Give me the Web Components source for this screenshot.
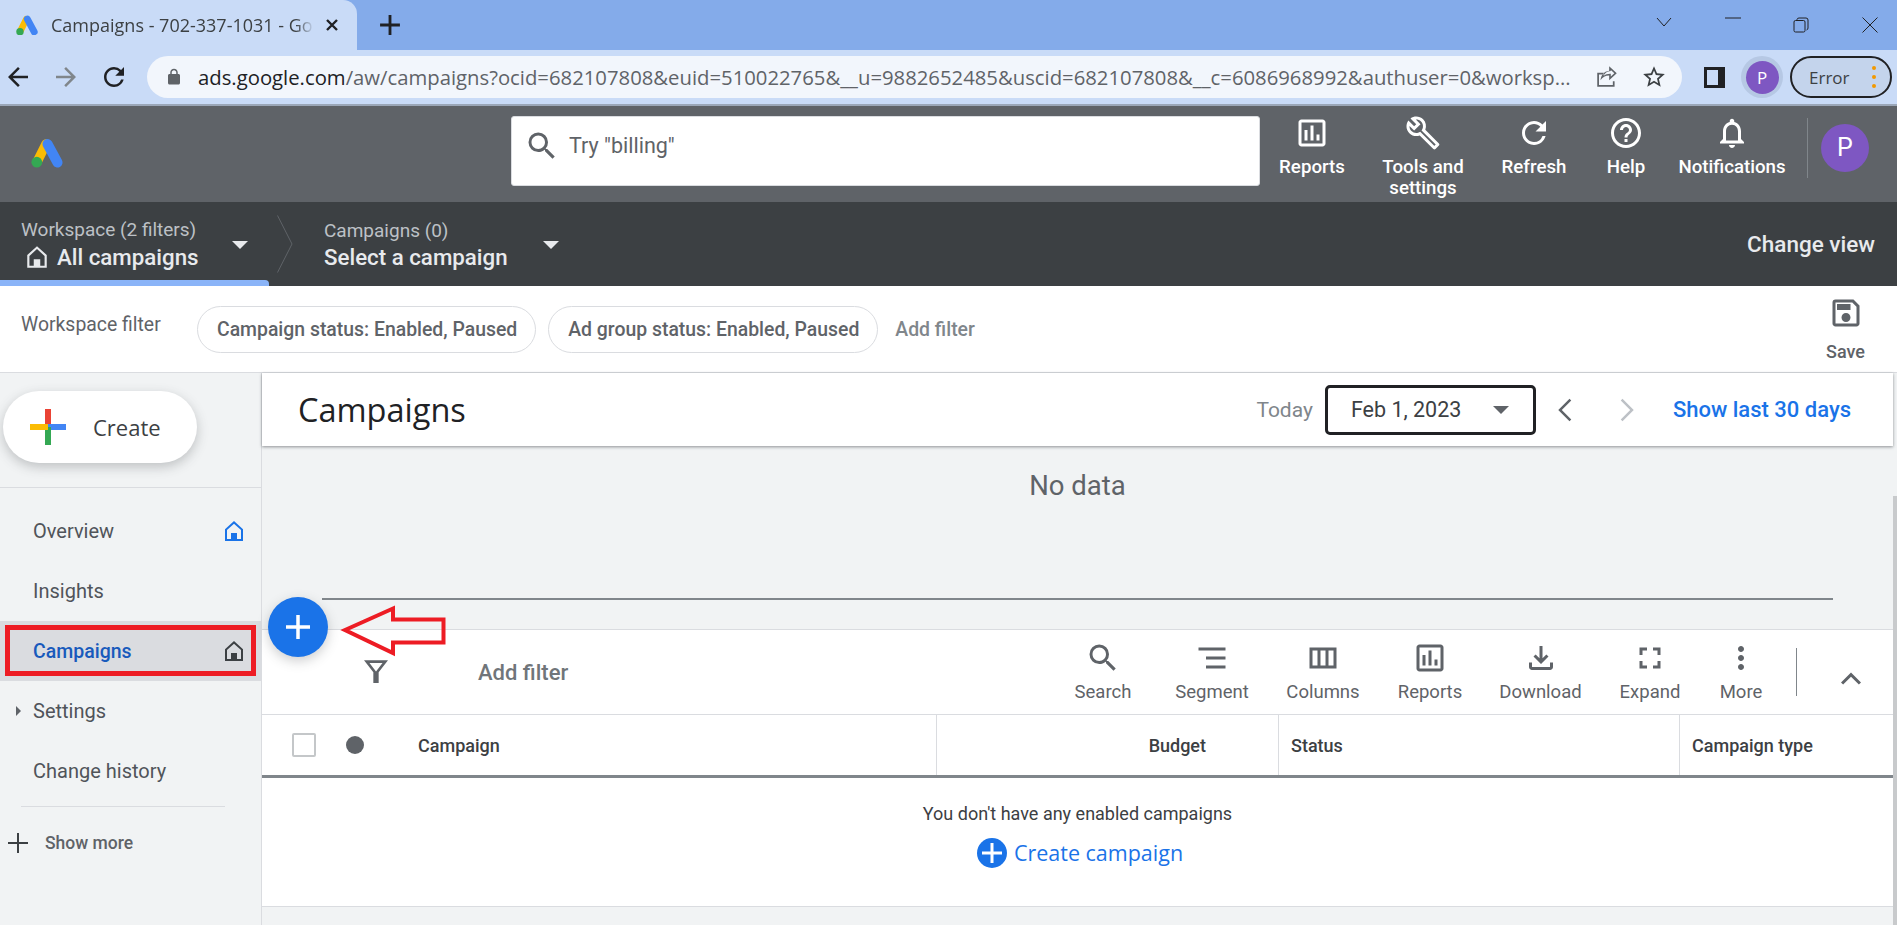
<!DOCTYPE html>
<html lang="en">
<head>
<meta charset="utf-8">
<title>Campaigns</title>
<style>
    html, body { margin: 0; padding: 0; height: 100%; overflow: hidden; background: #f1f3f4; }
    body { font-family: Roboto, "Liberation Sans", sans-serif; }
</style>
</head>
<body>
<ads-app></ads-app>

<script>
const ICONS = {
    search: 'M15.5 14h-.79l-.28-.27A6.471 6.471 0 0 0 16 9.5 6.5 6.5 0 1 0 9.5 16c1.61 0 3.09-.59 4.23-1.57l.27.28v.79l5 4.99L20.49 19l-4.99-5zm-6 0C7.01 14 5 11.99 5 9.5S7.01 5 9.5 5 14 7.01 14 9.5 11.99 14 9.5 14z',
    reports: 'M19 3H5c-1.1 0-2 .9-2 2v14c0 1.1.9 2 2 2h14c1.1 0 2-.9 2-2V5c0-1.1-.9-2-2-2zm0 16H5V5h14v14zM7 10h2v7H7zm4-3h2v10h-2zm4 6h2v4h-2z',
    tools: 'M22.61 18.99l-9.08-9.08c.93-2.34.45-5.1-1.44-7C9.79.61 6.21.4 3.66 2.25L7.5 6.1 6.08 7.51 2.25 3.69C.39 6.23.61 9.82 2.91 12.11c1.86 1.86 4.57 2.35 6.89 1.48l9.11 9.11c.39.39 1.02.39 1.41 0l2.3-2.3c.39-.38.39-1.02-.01-1.41zm-3 1.6l-9.46-9.46c-.61.45-1.29.72-2 .82-1.36.2-2.79-.21-3.83-1.25C3.37 9.76 2.93 8.5 3 7.26l3.09 3.09 4.24-4.24-3.09-3.09c1.24-.07 2.49.37 3.44 1.31 1.08 1.08 1.49 2.57 1.24 3.96-.12.71-.42 1.37-.88 1.96l9.45 9.45-.88.88z',
    refresh: 'M17.65 6.35A7.958 7.958 0 0 0 12 4c-4.42 0-7.99 3.58-7.99 8s3.57 8 7.99 8c3.73 0 6.84-2.55 7.73-6h-2.08A5.99 5.99 0 0 1 12 18c-3.31 0-6-2.69-6-6s2.69-6 6-6c1.66 0 3.14.69 4.22 1.78L13 11h7V4l-2.35 2.35z',
    help: 'M11 18h2v-2h-2v2zm1-16C6.48 2 2 6.48 2 12s4.48 10 10 10 10-4.48 10-10S17.52 2 12 2zm0 18c-4.41 0-8-3.59-8-8s3.59-8 8-8 8 3.59 8 8-3.59 8-8 8zm0-14c-2.21 0-4 1.79-4 4h2c0-1.1.9-2 2-2s2 .9 2 2c0 2-3 1.75-3 5h2c0-2.25 3-2.5 3-5 0-2.21-1.79-4-4-4z',
    bell: 'M12 22c1.1 0 2-.9 2-2h-4c0 1.1.9 2 2 2zm6-6v-5c0-3.07-1.63-5.64-4.5-6.32V4c0-.83-.67-1.5-1.5-1.5s-1.5.67-1.5 1.5v.68C7.64 5.36 6 7.92 6 11v5l-2 2v1h16v-1l-2-2zm-2 1H8v-6c0-2.48 1.51-4.5 4-4.5s4 2.02 4 4.5v6z',
    download: 'M18 15v3H6v-3H4v3c0 1.1.9 2 2 2h12c1.1 0 2-.9 2-2v-3h-2zm-1-4l-1.41-1.41L13 12.17V4h-2v8.17L8.41 9.59 7 11l5 5 5-5z',
    expand: 'M7 14H5v5h5v-2H7v-3zm-2-4h2V7h3V5H5v5zm12 7h-3v2h5v-5h-2v3zM14 5v2h3v3h2V5h-5z',
    more: 'M12 8c1.1 0 2-.9 2-2s-.9-2-2-2-2 .9-2 2 .9 2 2 2zm0 2c-1.1 0-2 .9-2 2s.9 2 2 2 2-.9 2-2-.9-2-2-2zm0 6c-1.1 0-2 .9-2 2s.9 2 2 2 2-.9 2-2-.9-2-2-2z',
    segment: 'M3 5h18v2H3zM8 11h13v2H8zM8 17h13v2H8z',
    columns: 'M3 5v14h18V5H3zm5.33 12H5V7h3.33v10zm5.34 0h-3.34V7h3.34v10zM19 17h-3.33V7H19v10z',
    save: 'M17 3H5a2 2 0 0 0-2 2v14c0 1.1.9 2 2 2h14c1.1 0 2-.9 2-2V7l-4-4zm2 16H5V5h11.17L19 7.83V19zm-7-7c-1.66 0-3 1.34-3 3s1.34 3 3 3 3-1.34 3-3-1.34-3-3-3zM6 6h9v4H6z',
    filter: 'M3 4h18l-7 9v8h-4v-8L3 4zm4.1 2l4.9 6.3L16.9 6H7.1z',
    home: 'M12 2L3 10.2V22h18V10.2L12 2zM19 20H5v-8.9l7-6.4 7 6.4V20zM9 14h6v6H9z',
    back: 'M20 11H7.83l5.59-5.59L12 4l-8 8 8 8 1.41-1.41L7.83 13H20v-2z',
    forward: 'M4 11h12.17l-5.59-5.59L12 4l8 8-8 8-1.41-1.41L16.17 13H4v-2z',
    lock: 'M18 8h-1V6c0-2.76-2.24-5-5-5S7 3.24 7 6v2H6c-1.1 0-2 .9-2 2v10c0 1.1.9 2 2 2h12c1.1 0 2-.9 2-2V10c0-1.1-.9-2-2-2zM9 6c0-1.66 1.34-3 3-3s3 1.34 3 3v2H9V6z',
    star: 'M22 9.24l-7.19-.62L12 2 9.19 8.63 2 9.24l5.46 4.73L5.82 21 12 17.27 18.18 21l-1.63-7.03L22 9.24zM12 15.4l-3.76 2.27 1-4.28-3.32-2.88 4.38-.38L12 6.1l1.71 4.04 4.38.38-3.32 2.88 1 4.28L12 15.4z',
    share: 'M3 10v11h16v-5h-1.6v3.4H4.6v-9.8H9V8H3v2zm11-8v4.2C9 6.9 6.5 10.5 6 15c1.8-2.9 4.4-4.3 8-4.4V15l7-6.5L14 2zm1.5 3.6l3.3 2.9-3.3 3v-2.4c-2.8-.1-5 .6-6.8 2 1-2.6 3.3-4.4 6.8-4.7V5.6z',
    plus: 'M19 13h-6v6h-2v-6H5v-2h6V5h2v6h6v2z',
    left: 'M15.41 4.41L14 3l-9 9 9 9 1.41-1.41L7.83 12z',
    right: 'M8.59 4.41L10 3l9 9-9 9-1.41-1.41L16.17 12z',
    up: 'M12 7.5l-8 8 1.7 1.7L12 10.9l6.3 6.3 1.7-1.7z'
};

class GIcon extends HTMLElement {
    connectedCallback() {
        const size = this.getAttribute('size') || 24;
        const color = this.getAttribute('color') || 'currentColor';
        const d = ICONS[this.getAttribute('name')];
        this.attachShadow({ mode: 'open' });
        this.shadowRoot.innerHTML = `
            <style>
                :host { display: block; flex: none; width: ${size}px; height: ${size}px; }
                svg { display: block; width: 100%; height: 100%; }
            </style>
            <svg viewBox="0 0 24 24"><path fill="${color}" fill-rule="evenodd" d="${d}"/></svg>
        `;
    }
}

class AdsLogo extends HTMLElement {
    connectedCallback() {
        const w = this.getAttribute('width') || 32;
        this.attachShadow({ mode: 'open' });
        this.shadowRoot.innerHTML = `
            <style>
                :host { display: block; flex: none; width: ${w}px; }
                svg { display: block; width: 100%; }
            </style>
            <svg viewBox="0 0 32 30">
                <path d="M15 6 L6 24" stroke="#fbbc04" stroke-width="9.5" stroke-linecap="round"/>
                <path d="M16.5 6 L26.5 24.5" stroke="#4285f4" stroke-width="10" stroke-linecap="round"/>
                <circle cx="5.8" cy="24.2" r="5.4" fill="#34a853"/>
            </svg>
        `;
    }
}

class BrowserChrome extends HTMLElement {
    constructor() {
        super();
        this.attachShadow({ mode: 'open' });
        this.shadowRoot.innerHTML = `
            <style>
                :host {
                    display: block;
                    height: 106px;
                    font-family: "Open Sans", "Noto Sans", sans-serif;
                    color: #202124;
                }
                .strip {
                    height: 50px;
                    background: #84abea;
                    display: flex;
                    align-items: center;
                }
                .tab {
                    width: 357px;
                    height: 50px;
                    box-sizing: border-box;
                    background: #c9dbf7;
                    border-radius: 0 14px 0 0;
                    display: flex;
                    align-items: center;
                    padding-left: 16px;
                }
                .tab-title {
                    width: 263px;
                    flex: none;
                    margin: 0 11px 0 13px;
                    font-size: 18px;
                    white-space: nowrap;
                    -webkit-mask-image: linear-gradient(90deg, #000 93%, transparent 100%);
                    mask-image: linear-gradient(90deg, #000 93%, transparent 100%);
                    color: #3c4043;
                }
                .new-tab { margin-left: 16px; }
                .win {
                    margin-left: auto;
                    display: grid;
                    grid-template-columns: repeat(4, 68.5px);
                    justify-items: center;
                    width: 274px;
                    margin-right: -7px;
                }
                .win svg { display: block; }
                .bar {
                    height: 54px;
                    box-sizing: border-box;
                    background: #c9dbf7;
                    display: flex;
                    align-items: center;
                    padding-left: 3px;
                }
                .nav { display: flex; gap: 18px; }
                .omni {
                    width: 1535px;
                    height: 42px;
                    margin-left: 18px;
                    box-sizing: border-box;
                    background: #f2f6fc;
                    border-radius: 21px;
                    display: flex;
                    align-items: center;
                    padding: 0 15px 0 18px;
                }
                .url {
                    margin-left: 15px;
                    width: 1376px;
                    flex: none;
                    font-size: 20.3px;
                    color: #5f6368;
                    white-space: nowrap;
                }
                .url b { font-weight: 400; color: #202124; }
                .omni-end { display: flex; gap: 21px; margin-left: auto; }
                .panel {
                    width: 21px;
                    height: 21px;
                    margin-left: 22px;
                    box-sizing: border-box;
                    background: #202124;
                    padding: 3px 7px 3px 3px;
                }
                .panel i { display: block; width: 100%; height: 100%; background: #c9dbf7; }
                .face {
                    width: 42px;
                    height: 42px;
                    margin-left: 16px;
                    border-radius: 50%;
                    background: #b6c8e4;
                    display: flex;
                    align-items: center;
                    justify-content: center;
                }
                .face span {
                    width: 33px;
                    height: 33px;
                    border-radius: 50%;
                    background: #7e57c2;
                    color: #fff;
                    font-size: 17px;
                    line-height: 33px;
                    text-align: center;
                }
                .err {
                    width: 102px;
                    height: 42px;
                    margin-left: 7px;
                    box-sizing: border-box;
                    border: 2px solid #202124;
                    border-radius: 21px;
                    background: #c4d4ec;
                    display: flex;
                    align-items: center;
                    padding-left: 17px;
                    font-size: 17px;
                    color: #3c4043;
                }
                .dots { margin-left: 22px; display: grid; gap: 5px; }
                .dots i { width: 4px; height: 4px; border-radius: 50%; background: #f29900; }
                .edge { height: 2px; background: #9ba7b8; }
            </style>
            <div class="strip">
                <div class="tab">
                    <ads-logo width="22"></ads-logo>
                    <div class="tab-title">Campaigns - 702-337-1031 - Go</div>
                    <svg width="14" height="14" viewBox="0 0 14 14"><path d="M2 2l10 10M12 2L2 12" stroke="#202124" stroke-width="2.4"/></svg>
                </div>
                <g-icon class="new-tab" name="plus" size="34" color="#202124"></g-icon>
                <div class="win">
                    <svg width="16" height="10" viewBox="0 0 16 10"><path d="M1 1l7 8 7-8" fill="none" stroke="#202124"/></svg>
                    <svg width="16" height="2" viewBox="0 0 16 2"><path d="M0 1h16" stroke="#202124"/></svg>
                    <svg width="16" height="16" viewBox="0 0 16 16"><path d="M4 3.5V2.5a2 2 0 0 1 2-1.5h7a2 2 0 0 1 2 2v8a2 2 0 0 1-1.5 2M2.5 3.5h8a1.5 1.5 0 0 1 1.5 1.5v8.5a1.5 1.5 0 0 1-1.5 1.5h-8a1.5 1.5 0 0 1-1.5-1.5V5a1.5 1.5 0 0 1 1.5-1.5z" fill="none" stroke="#202124"/></svg>
                    <svg width="16" height="16" viewBox="0 0 16 16"><path d="M.5.5l15 15M15.5.5l-15 15" stroke="#202124"/></svg>
                </div>
            </div>
            <div class="bar">
                <div class="nav">
                    <g-icon name="back" size="30" color="#202124"></g-icon>
                    <g-icon name="forward" size="30" color="#80868b"></g-icon>
                    <g-icon name="refresh" size="30" color="#202124"></g-icon>
                </div>
                <div class="omni">
                    <g-icon name="lock" size="18" color="#5f6368"></g-icon>
                    <div class="url"><b>ads.google.com</b>/aw/campaigns?ocid=682107808&amp;euid=510022765&amp;__u=9882652485&amp;uscid=682107808&amp;__c=6086968992&amp;authuser=0&amp;worksp...</div>
                    <div class="omni-end">
                        <g-icon name="share" size="26" color="#5f6368"></g-icon>
                        <g-icon name="star" size="26" color="#3c4043"></g-icon>
                    </div>
                </div>
                <div class="panel"><i></i></div>
                <div class="face"><span>P</span></div>
                <div class="err">Error<span class="dots"><i></i><i></i><i></i></span></div>
            </div>
            <div class="edge"></div>
        `;
    }
}

class ToolBtn extends HTMLElement {
    constructor() {
        super();
        this.attachShadow({ mode: 'open' });
        this.shadowRoot.innerHTML = `
            <style>
                :host {
                    display: flex;
                    flex-direction: column;
                    align-items: center;
                    flex: none;
                    text-align: center;
                    font-size: var(--tool-size, 18.7px);
                    font-weight: var(--tool-weight, 500);
                    line-height: 21px;
                    color: var(--tool-color, #fff);
                }
                .label { margin-top: var(--tool-gap, 6px); }
            </style>
            <slot name="icon"></slot>
            <div class="label"><slot></slot></div>
        `;
    }
}

class AdsHeader extends HTMLElement {
    constructor() {
        super();
        this.attachShadow({ mode: 'open' });
        this.shadowRoot.innerHTML = `
            <style>
                :host {
                    display: flex;
                    height: 96px;
                    box-sizing: border-box;
                    background: #5f6368;
                    padding: 9px 0 0 31px;
                }
                ads-logo { margin-top: 23px; }
                .search {
                    width: 749px;
                    height: 70px;
                    margin: 1px 0 0 448px;
                    box-sizing: border-box;
                    background: #fff;
                    border: 1px solid #dadce0;
                    border-radius: 3px;
                    display: flex;
                    padding: 11px 0 0 12px;
                    font-size: 21.5px;
                    color: #5f6368;
                }
                .search span { margin: 5px 0 0 9px; }
                .tools { display: flex; margin-left: 2px; }
                .rule { width: 1px; height: 60px; margin: 3px 0 0 11px; background: #80868b; }
                .me {
                    width: 48px;
                    height: 48px;
                    margin: 9px 0 0 13px;
                    border-radius: 50%;
                    background: #7e57c2;
                    color: #fff;
                    font-size: 25px;
                    line-height: 48px;
                    text-align: center;
                }
            </style>
            <ads-logo width="32"></ads-logo>
            <div class="search">
                <g-icon name="search" size="36" color="#5f6368"></g-icon>
                <span>Try "billing"</span>
            </div>
            <div class="tools">
                <tool-btn style="width:100px"><g-icon slot="icon" name="reports" size="36" color="#fff"></g-icon>Reports</tool-btn>
                <tool-btn style="width:122px"><g-icon slot="icon" name="tools" size="36" color="#fff"></g-icon>Tools and settings</tool-btn>
                <tool-btn style="width:100px"><g-icon slot="icon" name="refresh" size="36" color="#fff"></g-icon>Refresh</tool-btn>
                <tool-btn style="width:84px"><g-icon slot="icon" name="help" size="36" color="#fff"></g-icon>Help</tool-btn>
                <tool-btn style="width:128px"><g-icon slot="icon" name="bell" size="36" color="#fff"></g-icon>Notifications</tool-btn>
            </div>
            <div class="rule"></div>
            <div class="me">P</div>
        `;
    }
}

class CrumbItem extends HTMLElement {
    constructor() {
        super();
        this.attachShadow({ mode: 'open' });
        this.shadowRoot.innerHTML = `
            <style>
                :host {
                    display: flex;
                    position: relative;
                    box-sizing: border-box;
                    height: 84px;
                    flex: none;
                }
                :host([active])::after {
                    content: "";
                    position: absolute;
                    left: 0;
                    right: 0;
                    bottom: 0;
                    height: 6px;
                    background: #8ab4f8;
                    border-radius: 0 4px 0 0;
                }
                .text { width: var(--text-w); padding-top: var(--top); box-sizing: border-box; }
                .small { font-size: 19px; line-height: 22px; color: #bdc1c6; }
                .big {
                    display: flex;
                    align-items: center;
                    gap: 7px;
                    margin-top: var(--gap);
                    font-size: 22.3px;
                    font-weight: 500;
                    line-height: 26px;
                    color: #e8eaed;
                    white-space: nowrap;
                }
                .caret {
                    width: 0;
                    height: 0;
                    margin-top: 39px;
                    border: 8px solid transparent;
                    border-top-color: #e8eaed;
                    border-bottom: 0;
                }
            </style>
            <div class="text">
                <div class="small"><slot name="small"></slot></div>
                <div class="big"><slot name="icon"></slot><slot></slot></div>
            </div>
            <div class="caret"></div>
        `;
    }
}

class AdsCrumbs extends HTMLElement {
    constructor() {
        super();
        this.attachShadow({ mode: 'open' });
        this.shadowRoot.innerHTML = `
            <style>
                :host {
                    display: flex;
                    height: 84px;
                    background: #3c4043;
                }
                .first { width: 269px; padding-left: 21px; --text-w: 211px; --top: 17px; --gap: 3px; }
                .second { margin-left: 31px; --text-w: 219px; --top: 18px; --gap: 2px; }
                .sep { display: block; margin: 13px 0 0 8px; flex: none; }
                .view {
                    margin-left: auto;
                    padding: 29px 22px 0 0;
                    font-size: 22.5px;
                    font-weight: 500;
                    line-height: 26px;
                    color: #e8eaed;
                }
                .house { margin-left: 3px; }
            </style>
            <crumb-item class="first" active>
                <span slot="small">Workspace (2 filters)</span>
                <g-icon class="house" slot="icon" name="home" size="26" color="#e8eaed"></g-icon>
                All campaigns
            </crumb-item>
            <svg class="sep" width="16" height="58" viewBox="0 0 16 58"><path d="M.5.5L15 29 .5 57.5" fill="none" stroke="#5f6368"/></svg>
            <crumb-item class="second">
                <span slot="small">Campaigns (0)</span>
                Select a campaign
            </crumb-item>
            <div class="view">Change view</div>
        `;
    }
}

class FilterChip extends HTMLElement {
    constructor() {
        super();
        this.attachShadow({ mode: 'open' });
        this.shadowRoot.innerHTML = `
            <style>
                :host {
                    display: block;
                    flex: none;
                    height: 47px;
                    box-sizing: border-box;
                    padding: 0 18px 0 19px;
                    border: 1px solid #dadce0;
                    border-radius: 24px;
                    font-size: 19.4px;
                    font-weight: 500;
                    line-height: 45px;
                    color: #5f6368;
                }
            </style>
            <slot></slot>
        `;
    }
}

class FilterStrip extends HTMLElement {
    constructor() {
        super();
        this.attachShadow({ mode: 'open' });
        this.shadowRoot.innerHTML = `
            <style>
                :host {
                    display: flex;
                    height: 87px;
                    box-sizing: border-box;
                    background: #fff;
                    border-bottom: 1px solid #dadce0;
                    padding: 20px 0 0 21px;
                    font-size: 19.4px;
                    color: #5f6368;
                }
                .name { width: 176px; line-height: 24px; margin-top: 7px; }
                .add { margin: 12px 0 0 17px; line-height: 24px; font-weight: 500; color: #80868b; }
                tool-btn {
                    margin: -11px 32px 0 auto;
                    --tool-color: #5f6368;
                    --tool-size: 18px;
                    --tool-gap: 10px;
                }
                filter-chip + filter-chip { margin-left: 12px; }
            </style>
            <div class="name">Workspace filter</div>
            <filter-chip>Campaign status: Enabled, Paused</filter-chip>
            <filter-chip>Ad group status: Enabled, Paused</filter-chip>
            <div class="add">Add filter</div>
            <tool-btn><g-icon slot="icon" name="save" size="36" color="#5f6368"></g-icon>Save</tool-btn>
        `;
    }
}

class NavRow extends HTMLElement {
    constructor() {
        super();
        this.attachShadow({ mode: 'open' });
        this.shadowRoot.innerHTML = `
            <style>
                :host {
                    display: flex;
                    align-items: center;
                    height: 60px;
                    box-sizing: border-box;
                    padding: 0 15px 0 16px;
                    font-size: 20px;
                    color: #50545a;
                }
                :host([selected]) { background: #dadce0; color: #185abc; font-weight: 500; font-size: 19.5px; }
                .tri { width: 17px; height: 0; flex: none; }
                :host([expander]) .tri i {
                    display: block;
                    width: 0;
                    height: 0;
                    margin-top: -5px;
                    border: 5px solid transparent;
                    border-left-color: #5f6368;
                    border-right: 0;
                }
                .text { flex: 1; }
            </style>
            <div class="tri"><i></i></div>
            <div class="text"><slot></slot></div>
            <slot name="end"></slot>
        `;
    }
}

class SideNav extends HTMLElement {
    constructor() {
        super();
        this.attachShadow({ mode: 'open' });
        this.shadowRoot.innerHTML = `
            <style>
                :host {
                    display: block;
                    width: 262px;
                    flex: none;
                    box-sizing: border-box;
                    background: #f1f3f4;
                    border-right: 1px solid #dadce0;
                }
                .top {
                    height: 115px;
                    box-sizing: border-box;
                    padding: 18px 0 0 3px;
                    border-bottom: 1px solid #dadce0;
                }
                .create {
                    width: 194px;
                    height: 72px;
                    box-sizing: border-box;
                    display: flex;
                    align-items: center;
                    padding-left: 27px;
                    background: #fff;
                    border-radius: 36px;
                    box-shadow: 0 4px 12px rgba(60, 64, 67, .28);
                    font-family: "Open Sans", Roboto, sans-serif;
                    font-size: 22px;
                    color: #3c4043;
                }
                .create svg { display: block; margin-right: 27px; }
                .list { padding-top: 13px; }
                hr {
                    width: 204px;
                    height: 1px;
                    margin: 5px 0 0 21px;
                    border: 0;
                    background: #dadce0;
                }
                .more {
                    display: flex;
                    align-items: center;
                    margin-top: 23px;
                    padding-left: 6px;
                    height: 26px;
                    font-size: 17.5px;
                    font-weight: 500;
                    color: #5f6368;
                }
                .more svg { margin-right: 15px; }
            </style>
            <div class="top">
                <div class="create">
                    <svg width="36" height="36" viewBox="0 0 36 36">
                        <rect x="15" width="6" height="18" fill="#ea4335"/>
                        <rect x="18" y="15" width="18" height="6" fill="#4285f4"/>
                        <rect x="15" y="18" width="6" height="18" fill="#34a853"/>
                        <rect y="15" width="18" height="6" fill="#fbbc04"/>
                    </svg>
                    Create
                </div>
            </div>
            <div class="list">
                <nav-row>Overview<g-icon slot="end" name="home" size="24" color="#1a73e8"></g-icon></nav-row>
                <nav-row>Insights</nav-row>
                <nav-row selected>Campaigns<g-icon slot="end" name="home" size="24" color="#3c4043"></g-icon></nav-row>
                <nav-row expander>Settings</nav-row>
                <nav-row>Change history</nav-row>
            </div>
            <hr>
            <div class="more">
                <svg width="24" height="24" viewBox="0 0 24 24"><path d="M12 2v20M2 12h20" stroke="#3c4043" stroke-width="2"/></svg>
                Show more
            </div>
        `;
    }
}

class CampaignPanel extends HTMLElement {
    constructor() {
        super();
        this.attachShadow({ mode: 'open' });
        this.shadowRoot.innerHTML = `
            <style>
                :host {
                    display: block;
                    position: relative;
                    flex: 1;
                    min-width: 0;
                    font-size: 18px;
                    color: #5f6368;
                }
                .title {
                    display: flex;
                    align-items: center;
                    height: 73px;
                    box-sizing: border-box;
                    padding: 0 42px 0 36px;
                    background: #fff;
                    box-shadow: 0 1px 3px rgba(60, 64, 67, .55);
                    position: relative;
                }
                h1 {
                    margin: 0 auto 0 0;
                    font-family: "Open Sans", Roboto, sans-serif;
                    font-size: 32.5px;
                    font-weight: 400;
                    color: #202124;
                }
                .today { font-size: 21px; color: #80868b; margin-right: 12px; }
                .date {
                    width: 211px;
                    height: 50px;
                    box-sizing: border-box;
                    border: 3px solid #202124;
                    border-radius: 5px;
                    display: flex;
                    align-items: center;
                    padding: 0 24px 0 23px;
                    justify-content: space-between;
                    font-size: 21.5px;
                    color: #3c4043;
                }
                .date i {
                    width: 0;
                    height: 0;
                    border: 8px solid transparent;
                    border-top-color: #5f6368;
                    border-bottom: 0;
                }
                .pager { display: flex; gap: 28px; margin: 0 33px 0 16px; }
                .last { font-size: 22px; font-weight: 500; color: #1a73e8; }
                .chart { height: 183px; box-sizing: border-box; padding: 24px 60px 0; }
                .nodata { font-size: 27.5px; line-height: 32px; text-align: center; color: #5f6368; }
                .axis { height: 2px; margin-top: 96px; background: #80868b; }
                .card {
                    background: #fff;
                    border-top: 1px solid #dadce0;
                    border-bottom: 1px solid #dadce0;
                }
                .toolbar {
                    position: relative;
                    display: flex;
                    height: 85px;
                    box-sizing: border-box;
                    padding-top: 10px;
                    border-bottom: 1px solid #dadce0;
                    --tool-color: #5f6368;
                    --tool-weight: 400;
                    --tool-size: 18.5px;
                    --tool-gap: 6px;
                }
                .funnel { margin: 15px 0 0 98px; }
                .addf { margin: 21px auto 0 86px; font-size: 22px; font-weight: 500; line-height: 24px; color: #70757a; }
                .rule { width: 1px; height: 48px; margin: 8px 0 0 14px; background: #80868b; }
                .toolbar > g-icon:last-child { margin: 23px 27px 0 39px; }
                .head {
                    display: grid;
                    grid-template-columns: 674px 342px 401px 1fr;
                    height: 63px;
                    box-sizing: border-box;
                    border-bottom: 3px solid #80868b;
                    font-size: 18px;
                    font-weight: 500;
                    color: #3c4043;
                }
                .cell {
                    display: flex;
                    align-items: center;
                    box-sizing: border-box;
                    padding-left: 12px;
                    border-left: 1px solid #dadce0;
                }
                .cell.first { padding-left: 30px; border-left: 0; }
                .cell.budget { justify-content: flex-end; padding-right: 72px; }
                .box {
                    width: 24px;
                    height: 24px;
                    box-sizing: border-box;
                    border: 2px solid #c4c7c9;
                    border-radius: 2px;
                }
                .dot {
                    width: 18px;
                    height: 18px;
                    margin: 0 54px 0 30px;
                    border-radius: 50%;
                    background: #5f6368;
                }
                .empty {
                    height: 128px;
                    box-sizing: border-box;
                    padding-top: 25px;
                    text-align: center;
                    font-size: 18px;
                    line-height: 22px;
                    color: #3c4043;
                }
                .cta {
                    display: flex;
                    align-items: center;
                    justify-content: center;
                    gap: 7px;
                    margin: 13px 0 0 5px;
                    font-family: "Open Sans", Roboto, sans-serif;
                    font-size: 21.5px;
                    line-height: 30px;
                    color: #1a73e8;
                }
                .plus {
                    position: absolute;
                    left: 6px;
                    top: 224px;
                    width: 60px;
                    height: 60px;
                    border-radius: 50%;
                    background: #1a73e8;
                    box-shadow: 0 4px 12px rgba(60, 64, 67, .25);
                }
                .plus svg { display: block; }
            </style>
            <div class="title">
                <h1>Campaigns</h1>
                <span class="today">Today</span>
                <div class="date">Feb 1, 2023<i></i></div>
                <div class="pager">
                    <g-icon name="left" size="30" color="#5f6368"></g-icon>
                    <g-icon name="right" size="30" color="#bdc1c6"></g-icon>
                </div>
                <span class="last">Show last 30 days</span>
            </div>
            <div class="chart">
                <div class="nodata">No data</div>
                <div class="axis"></div>
            </div>
            <div class="card">
                <div class="toolbar">
                    <g-icon class="funnel" name="filter" size="32" color="#5f6368"></g-icon>
                    <div class="addf">Add filter</div>
                    <tool-btn style="width:108px"><g-icon slot="icon" name="search" size="36" color="#5f6368"></g-icon>Search</tool-btn>
                    <tool-btn style="width:110px"><g-icon slot="icon" name="segment" size="36" color="#5f6368"></g-icon>Segment</tool-btn>
                    <tool-btn style="width:112px"><g-icon slot="icon" name="columns" size="36" color="#5f6368"></g-icon>Columns</tool-btn>
                    <tool-btn style="width:102px"><g-icon slot="icon" name="reports" size="36" color="#5f6368"></g-icon>Reports</tool-btn>
                    <tool-btn style="width:119px"><g-icon slot="icon" name="download" size="36" color="#5f6368"></g-icon>Download</tool-btn>
                    <tool-btn style="width:100px"><g-icon slot="icon" name="expand" size="36" color="#5f6368"></g-icon>Expand</tool-btn>
                    <tool-btn style="width:82px"><g-icon slot="icon" name="more" size="36" color="#5f6368"></g-icon>More</tool-btn>
                    <div class="rule"></div>
                    <g-icon name="up" size="30" color="#5f6368"></g-icon>
                </div>
                <div class="head">
                    <div class="cell first"><div class="box"></div><div class="dot"></div>Campaign</div>
                    <div class="cell budget">Budget</div>
                    <div class="cell">Status</div>
                    <div class="cell">Campaign type</div>
                </div>
                <div class="empty">
                    <div>You don't have any enabled campaigns</div>
                    <div class="cta">
                        <svg width="30" height="30" viewBox="0 0 30 30"><circle cx="15" cy="15" r="15" fill="#1a73e8"/><path d="M15 5v20M5 15h20" stroke="#fff" stroke-width="3"/></svg>
                        Create campaign
                    </div>
                </div>
            </div>
            <div class="plus">
                <svg width="60" height="60" viewBox="0 0 60 60"><path d="M30 18v24M18 30h24" stroke="#fff" stroke-width="3.5"/></svg>
            </div>
        `;
    }
}

// the red box and arrow drawn on top of the screenshot
class AnnotLayer extends HTMLElement {
    constructor() {
        super();
        this.attachShadow({ mode: 'open' });
        this.shadowRoot.innerHTML = `
            <style>
                :host { display: block; position: absolute; inset: 0; pointer-events: none; }
                .box {
                    position: absolute;
                    left: 5px;
                    top: 625px;
                    width: 251px;
                    height: 51px;
                    box-sizing: border-box;
                    border: 5px solid #ed1c24;
                }
                svg { position: absolute; left: 340px; top: 604px; }
            </style>
            <div class="box"></div>
            <svg width="108" height="54" viewBox="0 0 108 54">
                <path d="M5 26 L53 4.5 V15.5 H103.5 V38.5 H53 V49 Z" fill="none" stroke="#ed1c24" stroke-width="4"/>
            </svg>
        `;
    }
}

class AdsApp extends HTMLElement {
    constructor() {
        super();
        this.attachShadow({ mode: 'open' });
        this.shadowRoot.innerHTML = `
            <style>
                :host {
                    display: block;
                    position: relative;
                    width: 1897px;
                    height: 925px;
                    overflow: hidden;
                    background: #f1f3f4;
                }
                .body { display: flex; height: 552px; }
                .scroll { width: 4px; flex: none; padding-top: 123px; box-sizing: border-box; }
                .scroll i { display: block; height: 100%; background: #c8cacc; }
            </style>
            <browser-chrome></browser-chrome>
            <ads-header></ads-header>
            <ads-crumbs></ads-crumbs>
            <filter-strip></filter-strip>
            <div class="body">
                <side-nav></side-nav>
                <campaign-panel></campaign-panel>
                <div class="scroll"><i></i></div>
            </div>
            <annot-layer></annot-layer>
        `;
    }
}

customElements.define('g-icon', GIcon);
customElements.define('ads-logo', AdsLogo);
customElements.define('browser-chrome', BrowserChrome);
customElements.define('tool-btn', ToolBtn);
customElements.define('ads-header', AdsHeader);
customElements.define('crumb-item', CrumbItem);
customElements.define('ads-crumbs', AdsCrumbs);
customElements.define('filter-chip', FilterChip);
customElements.define('filter-strip', FilterStrip);
customElements.define('nav-row', NavRow);
customElements.define('side-nav', SideNav);
customElements.define('campaign-panel', CampaignPanel);
customElements.define('annot-layer', AnnotLayer);
customElements.define('ads-app', AdsApp);
</script>
</body>
</html>
